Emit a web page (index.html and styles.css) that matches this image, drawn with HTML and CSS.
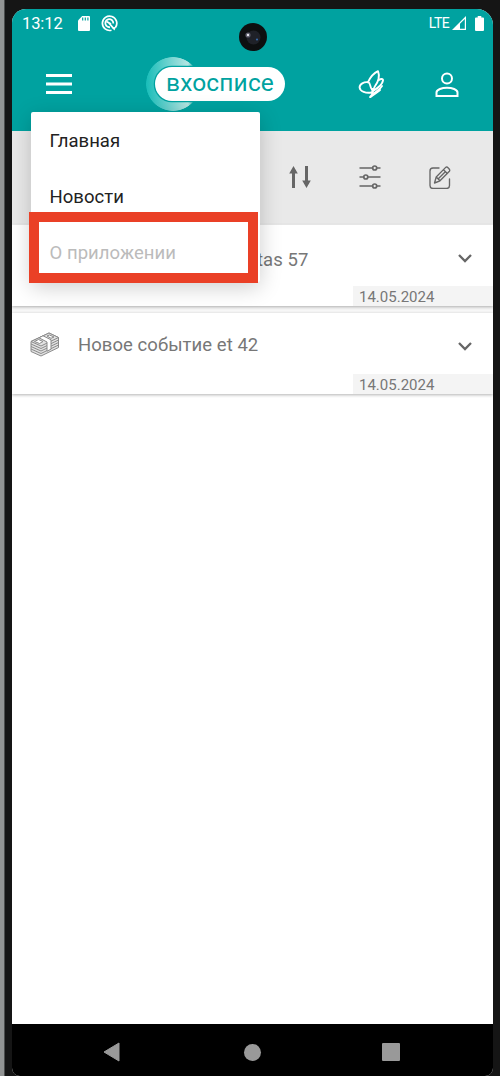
FILE: index.html
```html
<!DOCTYPE html>
<html lang="ru">
<head>
<meta charset="utf-8">
<title>вхосписе</title>
<link rel="stylesheet" href="styles.css">
</head>
<body>
<div class="phone">
  <div class="screen">
    <header class="top">
      <div class="status">
        <span class="clock">13:12</span>
        <svg class="sd" width="12" height="15" viewBox="0 0 12 15"><path d="M4.200 0H11a1 1 0 0 1 1 1v13a1 1 0 0 1-1 1H1a1 1 0 0 1-1-1V4.500z" fill="#fff"/><path d="M4.700 1.600v3M7.300 1.600v3M9.900 1.600v3" stroke="#00a2a0" stroke-width="1.200"/></svg>
        <svg class="dnd" width="17" height="17" viewBox="0 0 17 17" fill="none" stroke="#fff"><path d="M10.500 15.200A7.200 7.200 0 1 1 14.400 12.500" stroke-width="1.700"/><path d="M5.300 10.800A4 4 0 1 1 12.300 8.500M5.300 10.800A4 4 0 0 0 9 12.200" stroke-width="1.800"/><path d="M5.500 6.500l4.500 2.500M8 8l5 6" stroke-width="1.900"/><path d="M11 12.500l4-.8-1.500 3.800z" fill="#fff" stroke="none"/></svg>
        <span class="lte">LTE</span>
        <svg class="signal" width="14" height="14" viewBox="0 0 14 14"><path d="M14 0v14H0z" fill="#fff"/><path d="M12.800 3v9.800H8V7.800z" fill="#00a2a0"/></svg>
        <svg class="battery" width="9" height="15" viewBox="0 0 9 15"><path d="M2.700 0h3.600v1.500H8a1 1 0 0 1 1 1V14a1 1 0 0 1-1 1H1a1 1 0 0 1-1-1V2.500a1 1 0 0 1 1-1h1.700z" fill="#fff"/></svg>
      </div>
      <div class="appbar">
        <svg class="burger" width="26" height="20" viewBox="0 0 26 20"><path d="M0 1.500h26M0 10h26M0 18.500h26" stroke="#fff" stroke-width="3"/></svg>
        <div class="logo"><span class="pill">вхосписе</span></div>
        <svg class="butterfly" width="27" height="30" viewBox="0 0 27 30" fill="none" stroke="#fff" stroke-width="1.900" stroke-linejoin="round" stroke-linecap="round"><path d="M13.500 23.500C8 24.500 2 22.500 1.600 18.500 1.500 15 6 12.700 10 13.200 13 14 11.500 18 14 20.500"/><path d="M10 13.200C12 9 16 4 20 2.200 21.500 6 21 12 16.500 18L14 24"/><path d="M20.500 11.200C23 9.600 25.200 9.600 25 11.500 24.500 15 20 19 15 22"/><path d="M24 17C22 20 18 23 14 25.500L12 28M22 21C20 23 16 25 12.500 28M14.500 20v5"/></svg>
        <svg class="person" width="24" height="25" viewBox="0 0 24 25" fill="none" stroke="#fff" stroke-width="2"><circle cx="12" cy="6.500" r="5"/><path d="M1.500 24v-3.500C1.500 17.500 7 15.700 12 15.700s10.500 1.800 10.500 4.800V24z"/></svg>
      </div>
    </header>
    <div class="tools">
      <svg width="22" height="22" viewBox="0 0 22 22" fill="#666"><path d="M4.500 0l4.300 7.500H6V22H3V7.500H.2zM16 0h3v14.500h2.800L17.500 22l-4.300-7.500H16z"/></svg>
      <svg width="22" height="24" viewBox="0 0 22 24" fill="none" stroke="#666" stroke-width="1.700"><path d="M.5 3h13m4.500 0h3.500M.5 12h4M9 12h12.500M.5 21h13m4.500 0h3.500"/><circle cx="15.700" cy="3" r="2"/><circle cx="6.800" cy="12" r="2"/><circle cx="15.700" cy="21" r="2"/></svg>
      <svg width="22" height="23" viewBox="0 0 22 23" fill="none" stroke="#666" stroke-width="1.350" stroke-linejoin="round" stroke-linecap="round"><path d="M10 2H4a3 3 0 0 0-3 3v14.500a3 3 0 0 0 3 3h13.500a3 3 0 0 0 3-3V13"/><path d="M5.500 17l1.700-6L16.700 1.400c1.300-1.300 5 2.200 3.700 3.800L11 14.800zM14.500 3.700l3.800 3.800M7.200 11l3.800 3.800M9.300 12.800l6.500-6.500"/></svg>
    </div>
    <main class="list">
      <article class="card">
        <div class="row"><span class="name tail">tas 57</span><svg class="chevron" width="14" height="9" viewBox="0 0 14 9"><path d="M1 1l6 6 6-6" fill="none" stroke="#666" stroke-width="2.300"/></svg></div>
        <time class="date">14.05.2024</time>
      </article>
      <article class="card">
        <div class="row">
          <svg class="cash" width="30" height="25" viewBox="0 0 30 25" fill="#e2e2e2" stroke="#8a8a8a" stroke-width="1" stroke-linejoin="round"><path d="M1 9.500L19 1l9.500 4.500v10L11 24l-10-4.500z"/><path d="M1 12l10 4.500 17.500-8.500M1 14.500L11 19l17.500-8.500M1 17l10 4.500L28.500 13" fill="none"/><path d="M1 9.500L19 1l9.500 4.500L11 14z"/><path d="M4.500 9.500l4-2 4.500 2-3.500 2zM17 4l2.500-1 4.500 2-3 1.300z" fill="#fff"/><path d="M9 5.800l4-2 8 4v9.400l-4 2V10z" fill="#fff"/></svg>
          <span class="name">Новое событие et 42</span><svg class="chevron" width="14" height="9" viewBox="0 0 14 9"><path d="M1 1l6 6 6-6" fill="none" stroke="#666" stroke-width="2.300"/></svg></div>
        <time class="date">14.05.2024</time>
      </article>
    </main>
    <footer class="nav">
      <svg width="17" height="20" viewBox="0 0 17 20"><path d="M16 1v18L1 10z" fill="#999" stroke="#999" stroke-linejoin="round"/></svg>
      <span class="home"></span>
      <span class="recent"></span>
    </footer>
  </div>
  <svg class="camera" width="28" height="28" viewBox="0 0 28 28"><circle cx="14" cy="14" r="14" fill="#0d0f10"/><circle cx="14.500" cy="14.500" r="7" fill="#1f2128"/><circle cx="9" cy="12" r="2.600" fill="#5b5b68"/><circle cx="9" cy="12" r="1.200" fill="#e4e4ec"/><circle cx="18" cy="16.500" r="1.100" fill="#3769a8"/></svg>
  <nav class="menu">
    <span>Главная</span><span>Новости</span><span class="disabled">О приложении</span>
  </nav>
  <div class="highlight"></div>
</div>
</body>
</html>
```
FILE: styles.css
```css
* { box-sizing: border-box; }
body { margin: 0; font-family: Roboto, sans-serif; }
svg { display: block; flex: none; }
.phone {
  position: relative;
  width: 500px;
  height: 1076px;
  padding: 9px 7px 0 12px;
  overflow: hidden;
  background: linear-gradient(90deg, #929494 0 4px, #4b4d4d 4px 5px, #151515 5px);
}
.screen {
  display: flex;
  flex-direction: column;
  height: 1067px;
  overflow: hidden;
  background: #fff;
  border-radius: 14px 16px 8px 8px;
}
.top { height: 122px; background: #00a2a0; color: #fff; }
.status { display: flex; align-items: center; height: 28px; padding: 0 9px 0 10px; }
.clock { width: 41px; padding-top: 1px; font-size: 16.500px; letter-spacing: -.1px; white-space: nowrap; }
.sd { margin-left: 15px; }
.dnd { margin-left: 11px; }
.lte { margin-left: auto; font-size: 14px; letter-spacing: -.6px; }
.signal { margin-left: 3px; }
.battery { margin-left: 9px; }
.appbar { display: flex; align-items: center; height: 94px; padding: 0 34.500px 0 34px; }
.logo {
  display: flex;
  align-items: center;
  width: 139px;
  height: 54px;
  margin-left: 74px;
  background: radial-gradient(circle at 27px 27px, transparent 26.500px, #00a2a0 27.200px), linear-gradient(90deg, #18bdb9, #b5e5e2 42px, #00a2a0 50px);
}
.pill {
  width: 130px;
  height: 34px;
  margin-left: 9px;
  padding-left: 11px;
  border-radius: 18px;
  background: #fff;
  box-shadow: 0 0 0 1.300px #00a2a0;
  color: #00a2a0;
  font-size: 24.500px;
  letter-spacing: .15px;
  line-height: 32px;
  white-space: nowrap;
}
.butterfly { margin-left: 73px; }
.person { margin-left: auto; }
.tools {
  display: flex;
  align-items: center;
  justify-content: flex-end;
  gap: 48px;
  height: 94px;
  padding: 0 42px 1px 0;
  background: #e9e9e9;
  border-bottom: 1px solid #f3f3f3;
}
.list { display: flex; flex-direction: column; gap: 7px; flex: 1; background: linear-gradient(#f7f7f7 168px, #fff 168px); }
.card {
  display: flex;
  flex-direction: column;
  justify-content: space-between;
  height: 81px;
  background: #fff;
  box-shadow: 0 1px 3px rgba(0, 0, 0, .3);
}
.row { display: flex; align-items: center; height: 61px; padding: 2px 21px 0 18px; }
.name { margin-left: 18px; color: #777; font-size: 18.500px; letter-spacing: .05px; }
.tail { margin-left: 227px; padding-top: 7px; }
.chevron { margin-left: auto; margin-top: 3px; }
.date {
  align-self: flex-end;
  width: 140px;
  height: 20px;
  padding-left: 6px;
  background: #f4f4f4;
  color: #777;
  font-size: 15px;
  line-height: 22px;
}
.nav { display: flex; align-items: center; height: 52px; padding: 4px 93px 0 91px; justify-content: space-between; background: #000; }
.home { width: 17px; height: 17px; margin-left: 2px; border-radius: 50%; background: #999; }
.recent { width: 18px; height: 18px; border-radius: 1px; background: #999; }
.camera { position: absolute; left: 239px; top: 23px; }
.menu {
  position: absolute;
  left: 31px;
  top: 112px;
  display: flex;
  flex-direction: column;
  width: 229px;
  height: 170px;
  border-radius: 2px;
  background: #fff;
  box-shadow: 0 5px 22px rgba(0, 0, 0, .2);
  color: #222;
  font-size: 18.500px;
  letter-spacing: .05px;
}
.menu span { height: 56px; padding-left: 18.500px; line-height: 58px; }
.menu .disabled { color: #bbb; }
.highlight { position: absolute; left: 29px; top: 212px; width: 229px; height: 71px; border: 10px solid #ea4026; }
```
